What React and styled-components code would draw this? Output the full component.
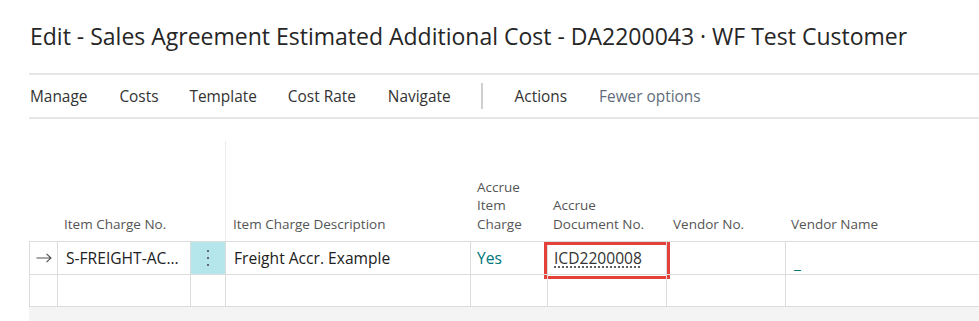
import React from "react";
import styled, { createGlobalStyle } from "styled-components";

const Global = createGlobalStyle`
  html, body { margin: 0; padding: 0; background: #ffffff; }
  body { font-family: "Open Sans", "Noto Sans", sans-serif; color: #212121; }
`;

const Page = styled.div`
  width: 979px;
  height: 321px;
  overflow: hidden;
  padding-left: 29px;
  box-sizing: border-box;
`;

const Title = styled.h1`
  margin: 0;
  height: 73px;
  padding: 21px 0 0 1px;
  box-sizing: border-box;
  font-size: 23px;
  line-height: 31px;
  font-weight: 400;
  color: #262626;
  white-space: nowrap;
`;

const Toolbar = styled.div`
  display: flex;
  align-items: center;
  height: 46px;
  box-sizing: border-box;
  border-top: 2px solid #e6e6e6;
  border-bottom: 2px solid #e6e6e6;
  padding-left: 1px;
`;

const ToolItem = styled.span`
  font-size: 15.4px;
  color: ${(p) => (p.$muted ? "#5f6d7c" : "#333333")};
  margin-right: ${(p) => p.$gap}px;
  white-space: nowrap;
`;

const Divider = styled.span`
  width: 2px;
  height: 26px;
  background: #cfcfcf;
  margin-right: 32px;
`;

const Grid = styled.div`
  display: grid;
  grid-template-columns: 28px 133px 35px 245px 77px 119px 119px 1fr;
`;

const Head = styled.div`
  height: 122px;
  box-sizing: border-box;
  display: flex;
  flex-direction: column;
  justify-content: flex-end;
  padding: 0 2px 8px ${(p) => p.$pad ?? 7}px;
  font-size: 13.5px;
  line-height: 18.5px;
  color: #555555;
  position: relative;
  white-space: nowrap;
  ${(p) =>
    p.$sep
      ? `&::before {
    content: "";
    position: absolute;
    left: 0;
    top: 22px;
    bottom: 0;
    width: 1px;
    background: #ececec;
  }`
      : ""}
`;

const Cell = styled.div`
  height: 33px;
  box-sizing: border-box;
  border-top: 1.5px solid #dcdcdc;
  border-left: 1.5px solid #dcdcdc;
  ${(p) => (p.$last ? "border-bottom: 1.5px solid #dcdcdc;" : "")}
  display: flex;
  align-items: center;
  justify-content: ${(p) => (p.$center ? "center" : "flex-start")};
  padding-left: ${(p) => p.$pad ?? 7}px;
  font-size: 15.6px;
  color: ${(p) => p.$color || "#212121"};
  background: ${(p) => p.$bg || "transparent"};
  white-space: nowrap;
  position: relative;
`;

const Dots = styled.span`
  display: flex;
  flex-direction: column;
  gap: 4.5px;
  align-items: center;
  & > i {
    width: 2.5px;
    height: 2.5px;
    border-radius: 50%;
    background: #404040;
  }
`;

const Lookup = styled.span`
  text-decoration: underline dotted #333;
  text-underline-offset: 3px;
  color: #333;
`;

const Highlight = styled.span`
  position: absolute;
  left: -4px;
  top: 0px;
  right: -4px;
  bottom: -5px;
  border: 3px solid #e5413b;
  pointer-events: none;
`;

const Dash = styled.span`
  color: #00767c;
  margin-top: 10px;
`;

const Footer = styled.div`
  height: 14px;
  background: #f4f4f5;
`;

const RowArrow = () => (
  <svg width="16" height="10" viewBox="0 0 16 10">
    <path d="M0.5 5 H15 M10.5 0.8 L15 5 L10.5 9.2" fill="none" stroke="#505050" strokeWidth="1.1" />
  </svg>
);

export default function App() {
  const headers = [
    { text: "", pad: 0 },
    { text: "Item Charge No.", pad: 7 },
    { text: "", pad: 0 },
    { text: "Item Charge Description", pad: 8, sep: true },
    { text: ["Accrue", "Item", "Charge"], pad: 7 },
    { text: ["Accrue", "Document No."], pad: 6 },
    { text: "Vendor No.", pad: 7 },
    { text: "Vendor Name", pad: 6 },
  ];
  return (
    <>
      <Global />
      <Page>
        <Title>Edit - Sales Agreement Estimated Additional Cost - DA2200043 · WF Test Customer</Title>
        <Toolbar>
          <ToolItem $gap={32}>Manage</ToolItem>
          <ToolItem $gap={31}>Costs</ToolItem>
          <ToolItem $gap={31}>Template</ToolItem>
          <ToolItem $gap={32}>Cost Rate</ToolItem>
          <ToolItem $gap={30}>Navigate</ToolItem>
          <Divider />
          <ToolItem $gap={32}>Actions</ToolItem>
          <ToolItem $muted $gap={0}>Fewer options</ToolItem>
        </Toolbar>
        <Grid>
          {headers.map((h, i) => (
            <Head key={i} $pad={h.pad} $sep={h.sep}>
              {Array.isArray(h.text) ? h.text.map((t) => <div key={t}>{t}</div>) : <div>{h.text}</div>}
            </Head>
          ))}

          <Cell $pad={6}><RowArrow /></Cell>
          <Cell $pad={8}>S-FREIGHT-AC...</Cell>
          <Cell $pad={0} $center $bg="#b4e6eb"><Dots><i /><i /><i /></Dots></Cell>
          <Cell $pad={8}>Freight Accr. Example</Cell>
          <Cell $pad={6} $color="#00767c">Yes</Cell>
          <Cell $pad={6}>
            <Lookup>ICD2200008</Lookup>
            <Highlight />
          </Cell>
          <Cell />
          <Cell $pad={8}><Dash>_</Dash></Cell>

          {Array.from({ length: 8 }).map((_, i) => (
            <Cell key={i} $last />
          ))}
        </Grid>
        <Footer />
      </Page>
    </>
  );
}
